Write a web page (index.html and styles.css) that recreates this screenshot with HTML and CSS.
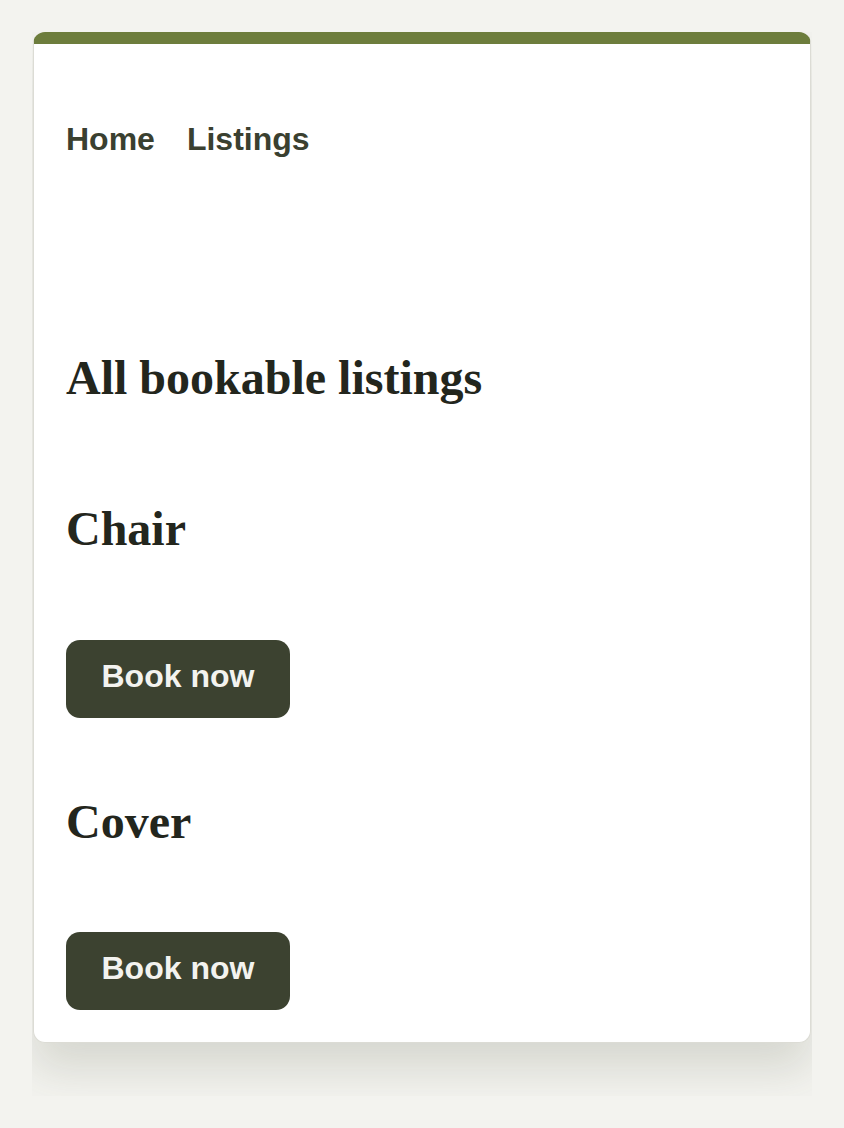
FILE: index.html
```html
<!DOCTYPE html>
<html>
<head>
	<title>Listings</title>
	<link rel="stylesheet" href="styles.css">
</head>
<body>
	<div class="shell">
		<div class="card">
			<nav class="site-nav">
				<a href="#">Home</a>
				<a href="#">Listings</a>
			</nav>

			<h1>All bookable listings</h1>

			<div class="listing">
				<h2>Chair</h2>
				<button class="book">Book now</button>
			</div>

			<div class="listing">
				<h2>Cover</h2>
				<button class="book">Book now</button>
			</div>
		</div>
	</div>
</body>
</html>
```

FILE: styles.css
```css
html, body {
	margin: 0;
	padding: 0;
	background-color: #f3f3ef;
	font-family: "Liberation Sans", Arial, sans-serif;
}

.shell {
	margin: 32px;
	padding: 0 1px 53px;
	overflow: hidden;
}

.card {
	display: flex;
	flex-direction: column;
	background-color: #fff;
	border: 1px solid #dcdcd5;
	border-top: 12px solid #6d7d3d;
	border-radius: 12px;
	padding: 0 32px 32px;
	box-shadow: 0 26px 44px rgba(70, 72, 50, 0.16);
}

.site-nav {
	display: flex;
	gap: 32px;
	margin-top: 77px;
}

.site-nav a {
	font-size: 32px;
	font-weight: bold;
	color: #3a4030;
	text-decoration: none;
}

h1, h2 {
	font-family: "Liberation Serif", "Times New Roman", serif;
	font-weight: bold;
	font-size: 48px;
	line-height: 1.2;
	color: #23261d;
	margin: 0;
}

h1 {
	margin-top: 191px;
}

.listing {
	display: flex;
	flex-direction: column;
	align-items: flex-start;
	margin-top: 75px;
}

h1 + .listing {
	margin-top: 93px;
}

.listing h2 {
	margin-bottom: 83px;
}

.listing + .listing h2 {
	margin-bottom: 81px;
}

.book {
	font-family: "Liberation Sans", Arial, sans-serif;
	font-size: 32px;
	font-weight: bold;
	line-height: 38px;
	padding: 17px 35.5px 23px;
	border: none;
	border-radius: 14px;
	background-color: #3c4230;
	color: #f3f3ef;
	cursor: pointer;
}
```
